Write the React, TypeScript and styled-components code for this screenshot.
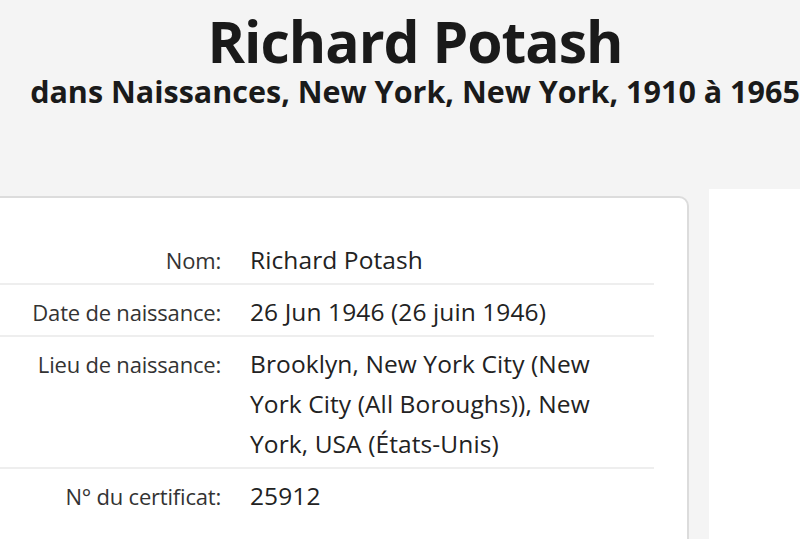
import styled, { createGlobalStyle } from 'styled-components';

const GlobalStyle = createGlobalStyle`
  html, body {
    margin: 0;
    padding: 0;
    background: #f4f4f4;
    overflow: hidden;
  }
  body {
    font-family: "Open Sans", Lato, sans-serif;
    color: #333;
  }
`;

const Page = styled.div`
  width: 800px;
  height: 539px;
  overflow: hidden;
`;

const Header = styled.header`
  padding-left: 30px;
  text-align: center;
  white-space: nowrap;
`;

const Title = styled.h1`
  margin: 0;
  padding-top: 8px;
  font-size: 57px;
  line-height: 66px;
  font-weight: 700;
  letter-spacing: -1px;
  color: #1a1a1a;
`;

const Subtitle = styled.h2`
  margin: 0;
  font-size: 30.5px;
  line-height: 34px;
  font-weight: 700;
  letter-spacing: 0;
  color: #1a1a1a;
`;

const Content = styled.div`
  display: grid;
  grid-template-columns: 729px 1fr;
  column-gap: 20px;
  align-items: start;
  margin-top: 81px;
  margin-left: -40px;
`;

const Card = styled.section`
  margin-top: 7px;
  background: #fff;
  border: 2px solid #dcdcdc;
  border-radius: 10px;
  padding: 35px 33px 40px 0;
  min-height: 400px;
`;

const Row = styled.div<{ $last?: boolean }>`
  display: grid;
  grid-template-columns: 259px 1fr;
  column-gap: 29px;
  padding: 7px 0 3px;
  border-bottom: ${p => (p.$last ? 'none' : '2px solid #eeeeee')};
`;

const Label = styled.div`
  text-align: right;
  font-size: 22px;
  line-height: 40px;
  letter-spacing: -0.2px;
  color: #333;
`;

const Value = styled.div`
  font-size: 24.5px;
  line-height: 40px;
  letter-spacing: 0.1px;
  color: #222;
  padding-right: 24px;
`;

const SidePanel = styled.aside`
  background: #fff;
  min-height: 400px;
`;

const rows = [
  { label: 'Nom:', value: 'Richard Potash' },
  { label: 'Date de naissance:', value: '26 Jun 1946 (26 juin 1946)' },
  {
    label: 'Lieu de naissance:',
    value: 'Brooklyn, New York City (New York City (All Boroughs)), New York, USA (États-Unis)',
  },
  { label: 'N° du certificat:', value: '25912' },
];

export default function App() {
  return (
    <Page>
      <GlobalStyle />
      <Header>
        <Title>Richard Potash</Title>
        <Subtitle>dans Naissances, New York, New York, 1910 à 1965</Subtitle>
      </Header>
      <Content>
        <Card>
          {rows.map((r, i) => (
            <Row key={r.label} $last={i === rows.length - 1}>
              <Label>{r.label}</Label>
              <Value>{r.value}</Value>
            </Row>
          ))}
        </Card>
        <SidePanel />
      </Content>
    </Page>
  );
}
